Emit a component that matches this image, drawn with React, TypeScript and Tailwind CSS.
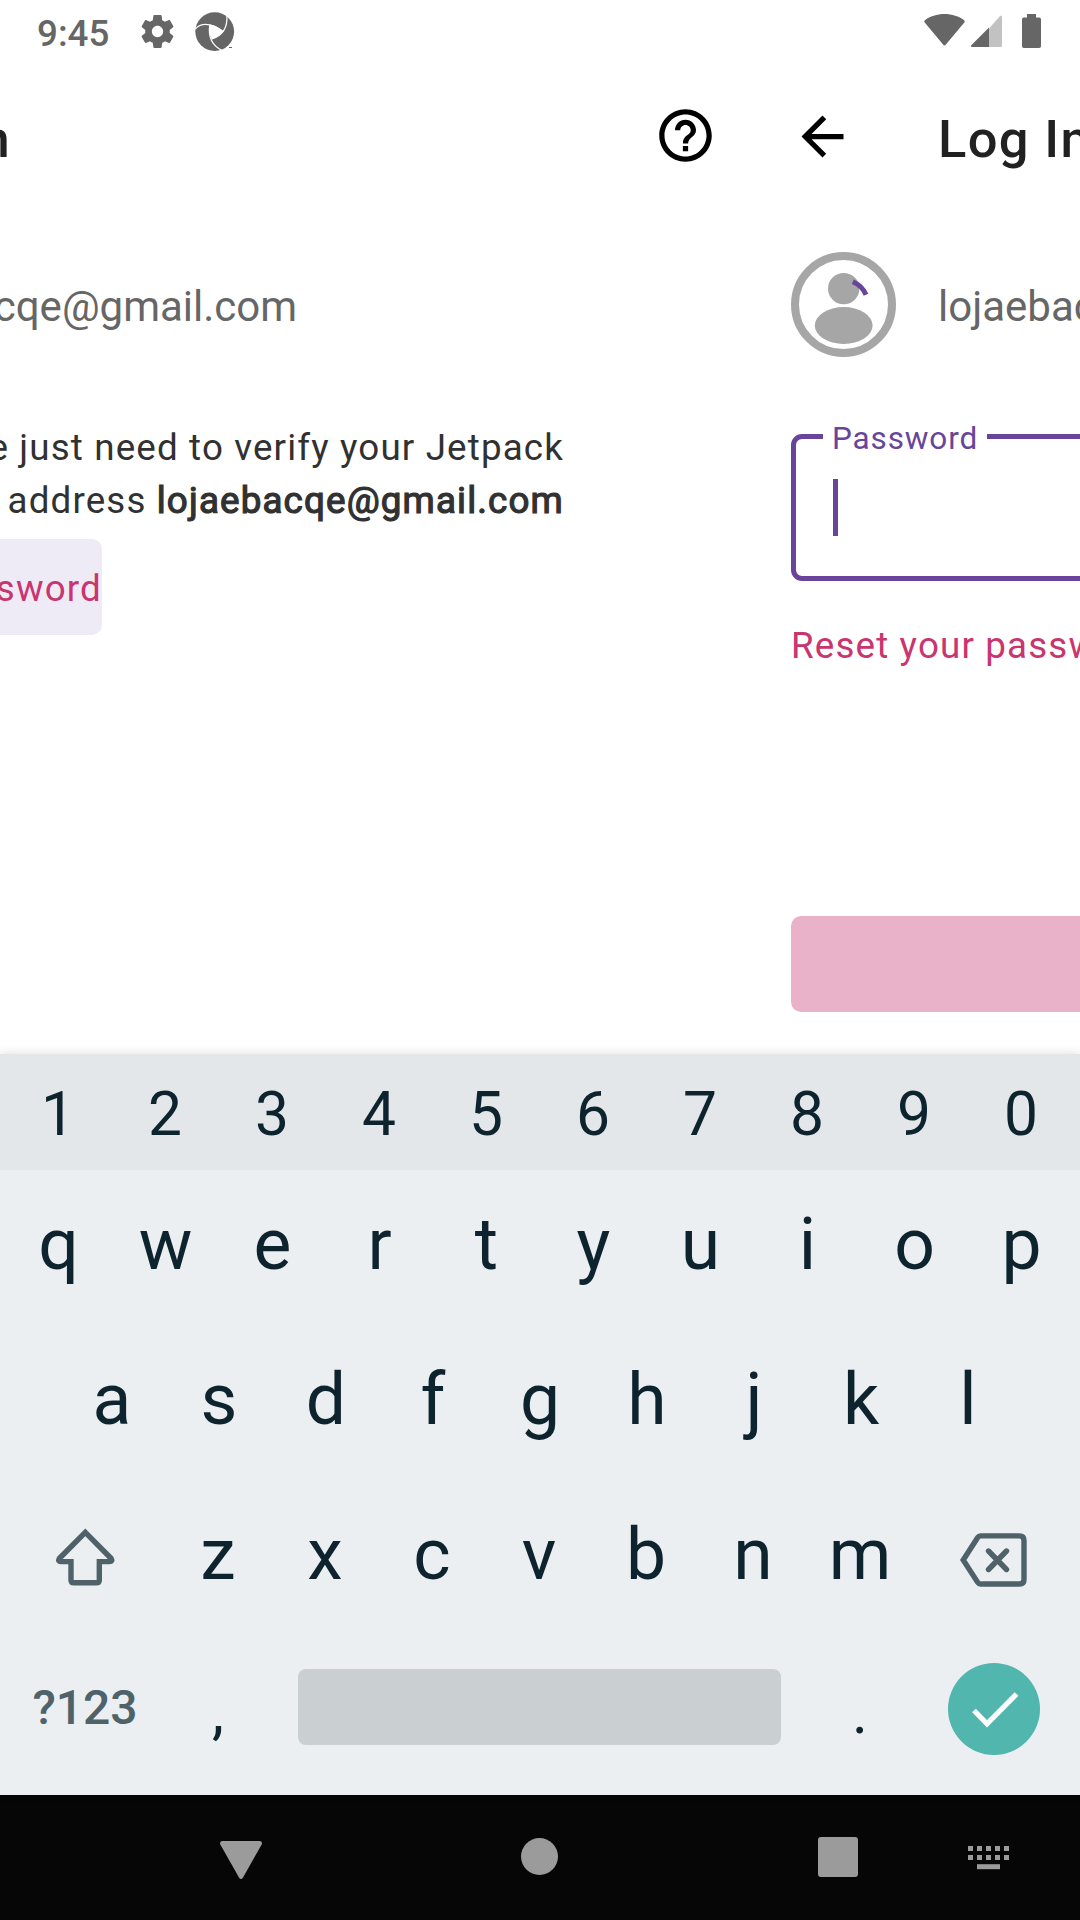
import type { ReactNode } from "react";

function StatusBar() {
  return (
    <header className="flex h-[63px] shrink-0 items-start justify-between text-[#666666]">
      <div className="flex pl-[37px] pt-[11px]">
        <span className="w-[99.5px] pt-px text-[36.75px] font-medium leading-[43px]">9:45</span>
        <svg className="h-[41px] w-[41px]" viewBox="0 0 24 24" fill="currentColor">
          <path d="M19.14 12.94c.04-.3.06-.61.06-.94 0-.32-.02-.64-.07-.94l2.03-1.58c.18-.14.23-.41.12-.61l-1.92-3.32c-.12-.22-.37-.29-.59-.22l-2.39.96c-.5-.38-1.03-.7-1.62-.94l-.36-2.54c-.04-.24-.24-.41-.48-.41h-3.84c-.24 0-.43.17-.47.41l-.36 2.54c-.59.24-1.13.57-1.62.94l-2.39-.96c-.22-.08-.47 0-.59.22L2.74 8.87c-.12.21-.08.47.12.61l2.03 1.58c-.05.3-.09.63-.09.94s.02.64.07.94l-2.03 1.58c-.18.14-.23.41-.12.61l1.92 3.32c.12.22.37.29.59.22l2.39-.96c.5.38 1.03.7 1.62.94l.36 2.54c.05.24.24.41.48.41h3.84c.24 0 .44-.17.47-.41l.36-2.54c.59-.24 1.13-.56 1.62-.94l2.39.96c.22.08.47 0 .59-.22l1.92-3.32c.12-.22.07-.47-.12-.61l-2.01-1.58zM12 15.3c-1.820 0-3.300-1.480-3.300-3.300s1.480-3.300 3.300-3.300 3.300 1.480 3.300 3.300-1.480 3.300-3.300 3.300z" />
        </svg>
        <svg className="ml-[17.5px] mt-px h-10 w-10" viewBox="0 0 40 40">
          <circle cx="19.7" cy="19.6" r="19.4" fill="currentColor" />
          <path d="M14.9 12.6Q22 13.5 28.3 19.6Q24 25 16.5 27.2Q13.2 20 14.9 12.6Z" fill="#fff" />
          <g fill="none" stroke="#fff" strokeWidth="1.2">
            <path d="M0 17Q10.4 6.8 28.3 19.6" />
            <path d="M31.8 3Q33.5 21.5 16.5 27.2" />
            <path d="M28 39Q11.5 31 14.9 12.6" />
          </g>
          <path d="M34 35.5h3" stroke="currentColor" strokeWidth="1" />
        </svg>
      </div>
      <div className="flex items-start pr-[39px] pt-[14px]">
        <svg className="h-8 w-[41px]" viewBox="0 0 41 32" fill="currentColor">
          <path d="M20.5 0C13 0 6 2.3.9 6.2.2 6.8.1 7.7.7 8.4L19.3 30.8C20 31.6 21 31.6 21.7 30.8L40.3 8.4C40.9 7.7 40.8 6.8 40.1 6.2C35 2.3 28 0 20.5 0Z" />
        </svg>
        <svg className="ml-[6px] mt-px h-8 w-8" viewBox="0 0 32 32" fill="currentColor">
          <path d="M18 13.5L28.8 1.3C29.8.3 31 .9 31 2.2V30.5Q31 32 29.5 32H18Z" fill="#c2c2c2" />
          <path d="M18 12.5V32H1.2C0 32-.4 30.8.5 29.9Z" />
        </svg>
        <svg className="ml-[19px] h-[34px] w-[19px]" viewBox="0 0 19 34" fill="currentColor">
          <path d="M5 0h9v3.6h3.2q1.8 0 1.8 1.8v26.8q0 1.8-1.8 1.8H1.8Q0 34 0 32.2V5.4q0-1.8 1.8-1.8H5z" />
        </svg>
      </div>
    </header>
  );
}

function Page({ title, action, children }: { title: string; action?: ReactNode; children: ReactNode }) {
  return (
    <section className="flex w-[1080px] shrink-0 flex-col">
      <div className="flex h-[147px] shrink-0 items-center pl-[42px] pr-[32px]">
        <svg className="h-[63px] w-[63px]" viewBox="0 0 24 24" fill="#000">
          <path d="M20 11H7.83l5.59-5.59L12 4l-8 8 8 8 1.41-1.41L7.83 13H20v-2z" />
        </svg>
        <h1 className="ml-[84px] flex-1 pt-[5px] text-[52.5px] font-medium leading-[60px] tracking-[0.025em] text-[#212121]">{title}</h1>
        {action}
      </div>
      {children}
    </section>
  );
}

function Avatar({ loading }: { loading?: boolean }) {
  return (
    <svg className="h-[105px] w-[105px]" viewBox="0 0 105 105" fill="#a6a6a6">
      <circle cx="52.5" cy="52.5" r="48.5" fill="none" stroke="#a6a6a6" strokeWidth="8" />
      <circle cx="52.7" cy="36.6" r="15.7" />
      <ellipse cx="52.7" cy="73.5" rx="28.9" ry="18.5" />
      {loading && <path d="M61.8 29.8A24.5 24.5 0 0 1 75 42.8" fill="none" stroke="#68459a" strokeWidth="5" />}
    </svg>
  );
}

function Account({ loading }: { loading?: boolean }) {
  return (
    <div className="mt-[42px] flex h-[105px] items-center gap-[42px] pl-[42px]">
      <Avatar loading={loading} />
      <span className="pt-[5px] text-[42px] leading-[50px] text-[#666666]">lojaebacqe@gmail.com</span>
    </div>
  );
}

function HelpIcon() {
  return (
    <svg className="mb-[2px] h-[63px] w-[63px]" viewBox="0 0 24 24" fill="#000">
      <path d="M11 18h2v-2h-2v2zm1-16C6.48 2 2 6.48 2 12s4.48 10 10 10 10-4.48 10-10S17.52 2 12 2zm0 18c-4.41 0-8-3.59-8-8s3.59-8 8-8 8 3.59 8 8-3.59 8-8 8zm0-14c-2.21 0-4 1.79-4 4h2c0-1.1.9-2 2-2s2 .9 2 2c0 2-3 1.75-3 5h2c0-2.25 3-2.5 3-5 0-2.21-1.79-4-4-4z" />
    </svg>
  );
}

function Keys({ chars }: { chars: string }) {
  return (
    <>
      {chars.split("").map((c) => (
        <span key={c} className="w-[107px] text-center">
          {c}
        </span>
      ))}
    </>
  );
}

function Keyboard() {
  return (
    <div className="relative h-[741px] shrink-0 bg-[#ebeff2] text-[#0d232d] shadow-[0_0_10px_rgba(0,0,0,0.14)]">
      <div className="flex h-[116px] justify-center bg-[#e3e7ea] pr-px text-[60.5px] leading-[122px]">
        <Keys chars="1234567890" />
      </div>
      <div className="-mt-px text-[71.4px] leading-[152px]">
        <div className="flex h-[154.5px] justify-center">
          <Keys chars="qwertyuiop" />
        </div>
        <div className="flex h-[154.5px] justify-center">
          <Keys chars="asdfghjkl" />
        </div>
        <div className="flex h-[154.5px] justify-center pr-[2px] leading-[153px]">
          <div className="flex w-[160px] justify-center">
            <svg className="mt-[50px] h-[58px] w-[60px]" viewBox="0 0 60 58" fill="none" stroke="#4f626a" strokeWidth="5.4">
              <path d="M30.3 4.3L56.2 30.5Q58 33.6 54.5 33.6H44.3V52Q44.3 54.8 41.5 54.8H18.8Q16 54.8 16 52V33.6H6Q2.5 33.6 4.3 30.5Z" />
            </svg>
          </div>
          <Keys chars="zxcvbnm" />
          <div className="flex w-[160px] justify-center">
            <svg className="mt-[55px] h-[54px] w-[67px]" viewBox="0 0 67 54" fill="none" stroke="#4f626a" strokeWidth="5.4">
              <path d="M20.5 2.9H59.5Q64 2.9 64 7.4V46.5Q64 51 59.5 51H20.5Q18.7 51 17.7 49.4L3.2 27L17.7 4.5Q18.7 2.9 20.5 2.9Z" />
              <path d="M28.5 18L46.5 36.5M46.5 18L28.5 36.5" strokeLinecap="round" />
            </svg>
          </div>
        </div>
        <div className="flex h-[154.5px] justify-center pr-[2px] text-[60.5px] leading-[160px]">
          <span className="w-[160px] pl-px text-center text-[48px] font-medium leading-[150px] text-[#4f626a]">?123</span>
          <Keys chars="," />
          <div className="mx-[26px] mt-[36px] h-[76px] w-[483px] rounded-lg bg-[#cacfd2]" />
          <Keys chars="." />
          <div className="flex w-[160px] justify-center">
            <svg className="mt-[30px] h-[92px] w-[92px] rounded-full bg-[#51b6ae]" viewBox="0 0 92 92" fill="none" stroke="#fff" strokeWidth="5.2">
              <path d="M26 47.5L39 60.8L68.5 31" />
            </svg>
          </div>
        </div>
      </div>
    </div>
  );
}

function NavBar() {
  return (
    <nav className="flex h-[125px] shrink-0 items-center bg-[#060606] pl-[220px] text-[#9b9b9b]">
      <svg className="mt-[4px] h-[38px] w-[42px]" viewBox="0 0 42 38" fill="currentColor">
        <path d="M2 0H40Q42.7.7 41.7 3.5L23 36.5Q21 39.5 19 36.5L.3 3.5Q-.7.7 2 0Z" />
      </svg>
      <div className="ml-[259px] mt-[-2px] h-[37px] w-[37px] rounded-full bg-[#9b9b9b]" />
      <div className="ml-[260px] mt-[-1px] h-[40px] w-[40px] rounded-[3px] bg-[#9b9b9b]" />
      <svg className="ml-[110px] h-6 w-[41px]" viewBox="0 0 41 24" fill="none" stroke="currentColor" strokeWidth="5">
        <path d="M0 2.5H41M0 11.5H41" strokeDasharray="5 4" />
        <path d="M9 20.7H32" />
      </svg>
    </nav>
  );
}

export default function App() {
  return (
    <div className="flex h-[1920px] w-[1080px] flex-col overflow-hidden bg-white font-['Roboto',sans-serif]">
      <StatusBar />
      <main className="-ml-[331px] flex h-[991px] w-[2160px] shrink-0">
        <Page title="Log In" action={<HelpIcon />}>
          <Account />
          <div className="mt-[64px] w-[895px] whitespace-nowrap text-right text-[36.75px] leading-[53px] tracking-[0.03125em] text-[#313131]">
            <p>We just need to verify your Jetpack</p>
            <p>
              email address <b className="font-normal [-webkit-text-stroke:1.2px_#313131]">lojaebacqe@gmail.com</b>
            </p>
          </div>
          <button className="ml-[42px] mt-[12px] h-[96px] w-[391px] rounded-[10px] bg-[#efebf6] pt-[4px] text-right text-[36.75px] tracking-[0.03125em] text-[#c9356e]">
            Enter your password
          </button>
        </Page>
        <Page title="Log In">
          <Account loading />
          <div className="relative ml-[42px] mt-[77px] flex h-[147px] w-[996px] items-center rounded-[11px] border-[5px] border-[#68459a] pl-[37px]">
            <label className="absolute left-[27px] top-[-19px] w-[164px] bg-white text-center text-[31.5px] leading-[38px] tracking-[0.028em] text-[#68459a]">
              Password
            </label>
            <div className="h-[57px] w-[5px] bg-[#68459a]" />
          </div>
          <a className="ml-[42px] mt-[40px] text-[36.75px] leading-[50px] tracking-[0.03125em] text-[#c9356e]">Reset your password?</a>
          <div className="ml-[42px] mt-[245px] h-[96px] w-[996px] rounded-[10px] bg-[#e9b2c9]" />
        </Page>
      </main>
      <Keyboard />
      <NavBar />
    </div>
  );
}
